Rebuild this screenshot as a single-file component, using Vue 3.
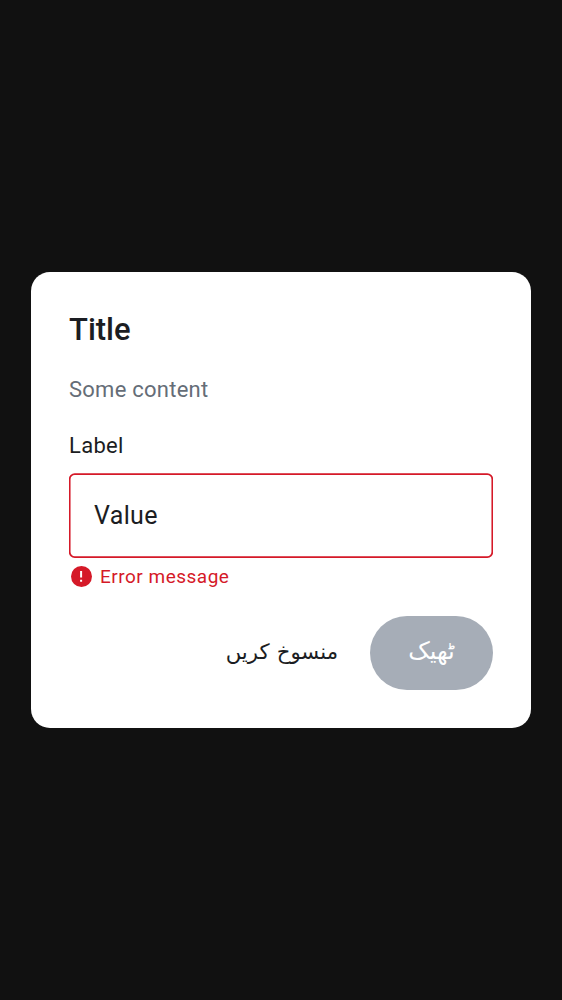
<script setup>
</script>

<template>
  <main class="screen">
    <section class="dialog">
      <h1 class="title">Title</h1>
      <p class="content">Some content</p>
      <label class="label">Label</label>
      <div class="field">
        <svg class="outline" viewBox="0 0 424 85"><rect x=".7" y="1.2" width="422.6" height="82.9" rx="5" fill="none" stroke="#d51928" stroke-width="1.7" /></svg>
        <span>Value</span>
      </div>
      <div class="error">
        <svg class="icon" viewBox="0 0 21 21"><circle cx="10.5" cy="10.5" r="10.5" fill="#d51928" /><path d="M10.1 5v6.6M10.1 13.7v2.1" stroke="#fff" stroke-width="2" /></svg>
        <span>Error message</span>
      </div>
      <div class="actions">
        <button class="cancel" dir="rtl"><span>منسوخ کریں</span></button>
        <button class="ok" dir="rtl"><span>ٹھیک</span></button>
      </div>
    </section>
  </main>
</template>

<style>
html, body { margin: 0; background: #111; }
</style>
<style scoped>
.screen { height: 1000px; background: #111; display: flex; align-items: center; justify-content: center; font-family: Roboto, "DejaVu Sans", sans-serif; }
.dialog { box-sizing: border-box; width: 500px; height: 456px; background: #fff; border-radius: 19px; padding: 39px 38px 38px; display: flex; flex-direction: column; color: #1b1d22; }
.title { margin: 0; font-size: 31px; line-height: 38px; font-weight: 500; }
.content { margin: 26px 0 0; font-size: 22px; line-height: 30px; letter-spacing: .25px; color: #656d77; }
.label { margin-top: 26px; font-size: 22px; line-height: 30px; letter-spacing: .3px; }
.field { position: relative; box-sizing: border-box; height: 85px; margin-top: 12px; padding-left: 25px; display: flex; align-items: center; font-size: 25px; letter-spacing: .35px; }
.outline { position: absolute; inset: 0; width: 424px; height: 85px; }
.error { display: flex; align-items: center; height: 24px; margin-top: 6px; padding-left: 2px; gap: 8px; font-size: 19px; letter-spacing: .5px; color: #d51928; }
.icon { width: 21px; height: 21px; }
.actions { display: flex; justify-content: flex-end; gap: 32px; margin-top: 28px; }
button { border: 0; padding: 0 0 4px; height: 74px; font: 400 21.2px Roboto, "DejaVu Sans", sans-serif; }
.cancel { background: none; color: #1b1d22; word-spacing: 2px; }
.ok { width: 123px; background: #a6adb7; color: #fff; border-radius: 37px; font-size: 24px; }
</style>
